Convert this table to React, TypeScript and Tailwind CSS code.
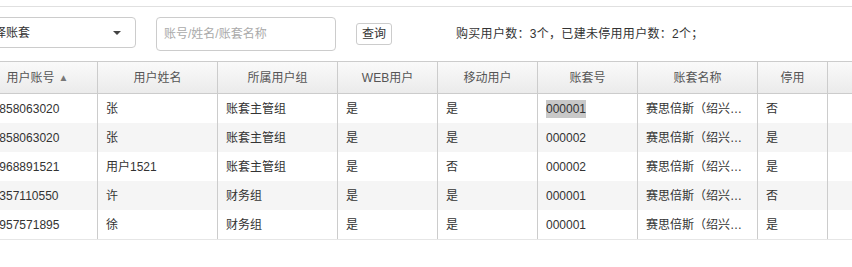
import React from "react";

const font = { fontFamily: '"Liberation Sans", Arial, "Noto Sans CJK SC", sans-serif' };

const columns = [
  { title: "用户账号", w: "w-[120px]", sort: true },
  { title: "用户姓名", w: "w-[120px]" },
  { title: "所属用户组", w: "w-[120px]" },
  { title: "WEB用户", w: "w-[100px]" },
  { title: "移动用户", w: "w-[100px]" },
  { title: "账套号", w: "w-[100px]" },
  { title: "账套名称", w: "w-[120px]" },
  { title: "停用", w: "w-[70px]" },
];

const rows = [
  ["13858063020", "张", "账套主管组", "是", "是", "000001", "赛思倍斯（绍兴…", "否"],
  ["13858063020", "张", "账套主管组", "是", "是", "000002", "赛思倍斯（绍兴…", "是"],
  ["13968891521", "用户1521", "账套主管组", "是", "否", "000002", "赛思倍斯（绍兴…", "是"],
  ["13357110550", "许", "财务组", "是", "是", "000001", "赛思倍斯（绍兴…", "否"],
  ["13957571895", "徐", "财务组", "是", "是", "000001", "赛思倍斯（绍兴…", "是"],
];

export default function App() {
  return (
    <div className="w-[852px] h-[267px] overflow-hidden bg-white text-[12px] text-[#333]" style={font}>
      <div className="h-[7px] border-b border-[#e0e0e0]" />

      {/* toolbar */}
      <div className="flex items-start pt-[10px] h-[54px]">
        <div className="-ml-[41px] w-[177px] h-[31px] border border-[#ccc] rounded-[4px] flex items-center justify-between pl-[10px] pr-[14px]">
          <span>请选择账套</span>
          <span className="w-0 h-0 border-l-[4px] border-r-[4px] border-t-[4px] border-l-transparent border-r-transparent border-t-[#444]" />
        </div>
        <div className="ml-[20px] w-[180px] h-[34px] border border-[#ccc] rounded-[4px] flex items-center pl-[7px] text-[#aaa]">
          账号/姓名/账套名称
        </div>
        <div className="ml-[20px] mt-[6px] w-[36px] h-[22px] border border-[#ccc] rounded-[3px] flex items-center justify-center bg-white">
          查询
        </div>
        <div className="ml-[64px] h-[34px] flex items-center tracking-[0.3px]">
          购买用户数：3个，已建未停用用户数：2个；
        </div>
      </div>

      {/* table */}
      <div className="-ml-[22px] w-[874px]">
        <div className="flex h-[33px] border-t border-b border-[#ccc] bg-gradient-to-b from-[#fafafa] to-[#ebebeb] text-[#555]">
          {columns.map((c) => (
            <div key={c.title} className={`${c.w} shrink-0 border-r border-[#ccc] flex items-center justify-center`}>
              {c.title}
              {c.sort && <span className="ml-[4px] text-[10px] text-[#777]">▲</span>}
            </div>
          ))}
          <div className="flex-1" />
        </div>
        {rows.map((r, i) => (
          <div key={i} className={`flex h-[29px] ${i % 2 === 1 ? "bg-[#f5f5f5]" : "bg-white"}`}>
            {r.map((cell, j) => (
              <div key={j} className={`${columns[j].w} shrink-0 border-r border-[#ccc] flex items-center pl-[8px] whitespace-nowrap overflow-hidden`}>
                {i === 0 && j === 5 ? <span className="bg-[#c8c8c8]">{cell}</span> : cell}
              </div>
            ))}
            <div className="flex-1" />
          </div>
        ))}
        <div className="border-t border-[#e6e6e6]" />
      </div>
    </div>
  );
}
